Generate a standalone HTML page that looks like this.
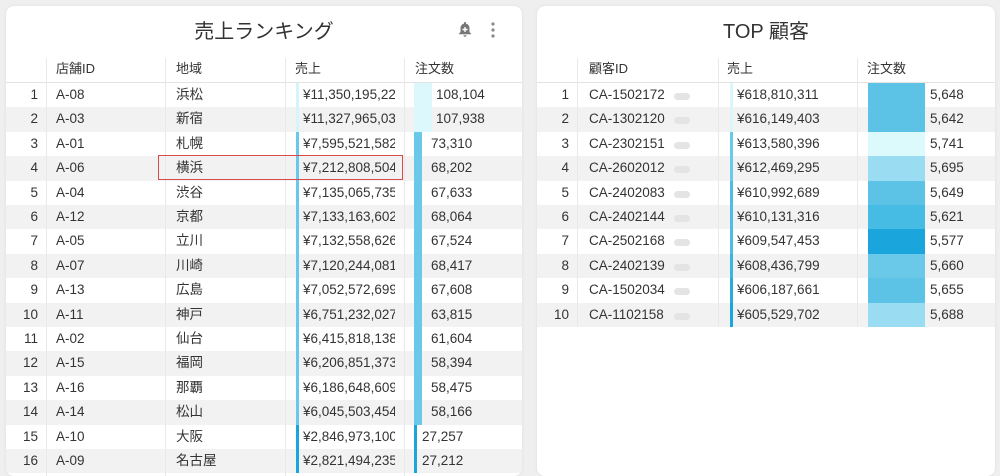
<!DOCTYPE html><html><head><meta charset="utf-8"><style>
body{margin:0;width:1000px;height:462px;background:#efefef;font-family:"Liberation Sans","Noto Sans CJK JP",sans-serif;color:#333;overflow:hidden;position:relative}
.card{position:absolute;top:6px;background:#fff;border-radius:8px;height:470px;overflow:hidden;box-shadow:0 0 3px rgba(0,0,0,.08)}
.title{position:absolute;top:12px;width:100%;text-align:center;font-size:20px;line-height:28px;color:#333}
.hd{position:absolute;top:52px;height:24px;left:0;right:0;border-bottom:1px solid #e3e3e3;font-size:13px}
.hd span{position:absolute;top:0;line-height:22px}
.vl{position:absolute;top:52px;bottom:0;width:1px;background:#e9e9e9}
#R .vl{bottom:auto;height:268px}
.row{position:absolute;left:0;right:0;height:24.4px;font-size:13.5px}
.row span{position:absolute;top:0;line-height:24px;white-space:nowrap}
.b{position:absolute;top:0;height:24.4px}
</style></head><body>
<div class="card" style="left:6px;width:516px" id="L">
<div class="title">売上ランキング</div>
<svg style="position:absolute;left:451px;top:15px" width="16" height="18" viewBox="0 0 16 18"><path d="M8 1c-.6 0-1 .4-1 1v.6C4.8 3.1 3.5 5 3.5 7.2V11L2 12.5v.8h12v-.8L12.5 11V7.2c0-2.2-1.3-4.1-3.5-4.6V2c0-.6-.4-1-1-1zM6.5 14.2a1.5 1.5 0 003 0z" fill="#777"/><path d="M8 6v5M5.5 8.5h5" stroke="#fff" stroke-width="1.4"/></svg>
<svg style="position:absolute;left:485px;top:16px" width="4" height="16"><circle cx="2" cy="2" r="1.6" fill="#888"/><circle cx="2" cy="8" r="1.6" fill="#888"/><circle cx="2" cy="14" r="1.6" fill="#888"/></svg>
<div class="hd"><span style="left:50px">店舗ID</span><span style="left:170px">地域</span><span style="left:289px">売上</span><span style="left:409px">注文数</span></div>
<div id="lrows"></div>
<div class="vl" style="left:40px"></div><div class="vl" style="left:159px"></div><div class="vl" style="left:279px"></div><div class="vl" style="left:398px"></div>
</div>
<div class="card" style="left:537px;width:458px" id="R">
<div class="title">TOP 顧客</div>
<div class="hd"><span style="left:52px">顧客ID</span><span style="left:190px">売上</span><span style="left:330px">注文数</span></div>
<div id="rrows"></div>
<div class="vl" style="left:40px"></div><div class="vl" style="left:181px"></div><div class="vl" style="left:320px"></div>
</div>
<div style="position:absolute;left:158px;top:155px;width:245px;height:25px;border:1px solid #d94a4a;box-sizing:border-box"></div>
<script>
var L=[["A-08","浜松","¥11,350,195,22","108,104",0],["A-03","新宿","¥11,327,965,03","107,938",0],["A-01","札幌","¥7,595,521,582","73,310",1],["A-06","横浜","¥7,212,808,504","68,202",1],["A-04","渋谷","¥7,135,065,735","67,633",1],["A-12","京都","¥7,133,163,602","68,064",1],["A-05","立川","¥7,132,558,626","67,524",1],["A-07","川崎","¥7,120,244,081","68,417",1],["A-13","広島","¥7,052,572,699","67,608",1],["A-11","神戸","¥6,751,232,027","63,815",1],["A-02","仙台","¥6,415,818,138","61,604",1],["A-15","福岡","¥6,206,851,373","58,394",1],["A-16","那覇","¥6,186,648,609","58,475",1],["A-14","松山","¥6,045,503,454","58,166",1],["A-10","大阪","¥2,846,973,100","27,257",2],["A-09","名古屋","¥2,821,494,235","27,212",2]];
var h="";L.forEach(function(r,i){var t=77+i*24.4,bg=i%2?"#f2f2f2":"#fff";
var sc=r[4]==0?"#d4f6fb":r[4]==1?"#6ac8e8":"#1aa5dc";
var ob=r[4]==0?'<div class="b" style="left:408px;width:18px;background:#dcf8fc"></div>':r[4]==1?'<div class="b" style="left:408px;width:8px;background:#6ac8e8"></div>':'<div class="b" style="left:408px;width:3px;background:#1aa5dc"></div>';
var ox=r[4]==0?430:r[4]==1?425:416;
h+='<div class="row" style="top:'+t+'px;background:'+bg+'"><span style="left:0;width:32px;text-align:right">'+(i+1)+'</span><span style="left:50px">'+r[0]+'</span><span style="left:170px">'+r[1]+'</span><div class="b" style="left:290px;width:3px;background:'+sc+'"></div><span style="left:297px;width:92px;overflow:hidden">'+r[2]+'</span>'+ob+'<span style="left:'+ox+'px">'+r[3]+'</span></div>';});
document.getElementById("lrows").innerHTML=h;
var R=[["CA-1502172","¥618,810,311","5,648","#5cc3e6","#d8f7fb"],["CA-1302120","¥616,149,403","5,642","#5cc3e6","#d8f7fb"],["CA-2302151","¥613,580,396","5,741","#dcf9fc","#6ac8e8"],["CA-2602012","¥612,469,295","5,695","#9adcf1","#6ac8e8"],["CA-2402083","¥610,992,689","5,649","#5cc3e6","#4dbde4"],["CA-2402144","¥610,131,316","5,621","#46bbe4","#4dbde4"],["CA-2502168","¥609,547,453","5,577","#1aa5dc","#4dbde4"],["CA-2402139","¥608,436,799","5,660","#6ac8e8","#3cb4e0"],["CA-1502034","¥606,187,661","5,655","#5cc3e6","#2aaade"],["CA-1102158","¥605,529,702","5,688","#9adcf1","#1aa5dc"]];
h="";R.forEach(function(r,i){var t=77+i*24.4,bg=i%2?"#f2f2f2":"#fff";
h+='<div class="row" style="top:'+t+'px;background:'+bg+'"><span style="left:0;width:32px;text-align:right">'+(i+1)+'</span><span style="left:52px">'+r[0]+'</span><div style="position:absolute;left:137px;top:10px;width:16px;height:7px;border-radius:4px;background:#e4e4e4"></div><div class="b" style="left:193px;width:3px;background:'+r[4]+'"></div><span style="left:200px">'+r[1]+'</span><div class="b" style="left:331px;width:57px;background:'+r[3]+'"></div><span style="left:393px">'+r[2]+'</span></div>';});
document.getElementById("rrows").innerHTML=h;
</script>
</body></html>
